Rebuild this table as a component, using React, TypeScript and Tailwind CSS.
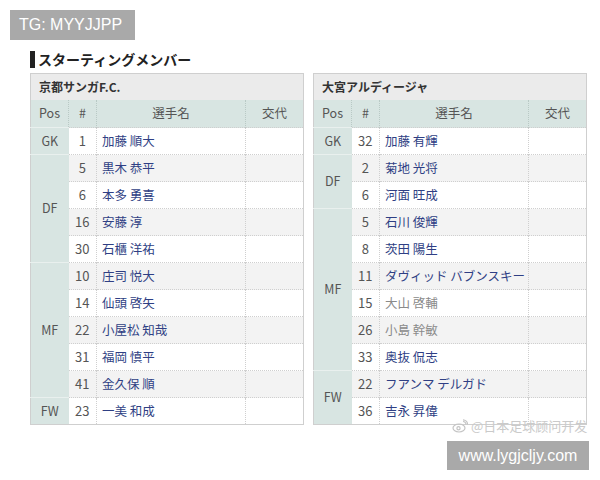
import React from 'react';

type Player = { no: number; name: string; muted?: boolean };
type Group = { pos: string; players: Player[] };
type Team = { name: string; groups: Group[] };

const kyoto: Team = {
  name: '京都サンガF.C.',
  groups: [
    { pos: 'GK', players: [{ no: 1, name: '加藤 順大' }] },
    {
      pos: 'DF',
      players: [
        { no: 5, name: '黒木 恭平' },
        { no: 6, name: '本多 勇喜' },
        { no: 16, name: '安藤 淳' },
        { no: 30, name: '石櫃 洋祐' },
      ],
    },
    {
      pos: 'MF',
      players: [
        { no: 10, name: '庄司 悦大' },
        { no: 14, name: '仙頭 啓矢' },
        { no: 22, name: '小屋松 知哉' },
        { no: 31, name: '福岡 慎平' },
        { no: 41, name: '金久保 順' },
      ],
    },
    { pos: 'FW', players: [{ no: 23, name: '一美 和成' }] },
  ],
};

const omiya: Team = {
  name: '大宮アルディージャ',
  groups: [
    { pos: 'GK', players: [{ no: 32, name: '加藤 有輝' }] },
    {
      pos: 'DF',
      players: [
        { no: 2, name: '菊地 光将' },
        { no: 6, name: '河面 旺成' },
      ],
    },
    {
      pos: 'MF',
      players: [
        { no: 5, name: '石川 俊輝' },
        { no: 8, name: '茨田 陽生' },
        { no: 11, name: 'ダヴィッド バブンスキー' },
        { no: 15, name: '大山 啓輔', muted: true },
        { no: 26, name: '小島 幹敏', muted: true },
        { no: 33, name: '奥抜 侃志' },
      ],
    },
    {
      pos: 'FW',
      players: [
        { no: 22, name: 'フアンマ デルガド' },
        { no: 36, name: '吉永 昇偉' },
      ],
    },
  ],
};

function LineupTable({ team }: { team: Team }) {
  let idx = 0;
  return (
    <table className="w-[273px] table-fixed border-collapse border border-[#cfcfcf] text-[12.5px] text-[#555]">
      <colgroup>
        <col className="w-[38px]" />
        <col className="w-[28px]" />
        <col className="w-[149px]" />
        <col className="w-[58px]" />
      </colgroup>
      <thead>
        <tr className="h-[26px] bg-[#ebebeb]">
          <th colSpan={4} className="pl-[8px] text-left text-[12px] font-bold text-[#333]">
            {team.name}
          </th>
        </tr>
        <tr className="h-[28px] bg-[#d8e5e2] font-normal">
          <th className="font-normal">Pos</th>
          <th className="border-l border-dotted border-[#b9c9c5] font-normal">#</th>
          <th className="border-l border-dotted border-[#b9c9c5] font-normal">選手名</th>
          <th className="border-l border-dotted border-[#b9c9c5] font-normal">交代</th>
        </tr>
      </thead>
      <tbody>
        {team.groups.map((g) =>
          g.players.map((p, i) => {
            const shade = idx++ % 2 === 1 ? 'bg-[#f3f3f3]' : 'bg-white';
            return (
              <tr key={`${g.pos}-${p.no}`} className="h-[27px]">
                {i === 0 && (
                  <td
                    rowSpan={g.players.length}
                    className="border-t border-[#e9f0ee] bg-[#d8e5e2] text-center"
                  >
                    {g.pos}
                  </td>
                )}
                <td className={`${shade} border-t border-dotted border-[#cfcfcf] text-center text-[13px]`}>{p.no}</td>
                <td
                  className={`${shade} border-t border-l border-dotted border-[#cfcfcf] pl-[5px] whitespace-nowrap ${
                    p.muted ? 'text-[#8a8a8a]' : 'text-[#2f3f84]'
                  }`}
                >
                  {p.name}
                </td>
                <td className={`${shade} border-t border-l border-dotted border-[#cfcfcf]`} />
              </tr>
            );
          })
        )}
      </tbody>
    </table>
  );
}

export default function App() {
  return (
    <div
      className="relative h-[480px] w-[600px] overflow-hidden bg-white"
      style={{ fontFamily: '"Noto Sans CJK JP", "Liberation Sans", sans-serif' }}
    >
      <div className="pl-[10px] pt-[10px]">
        <div className="inline-flex h-[30px] w-[125px] items-center bg-[#a9a9a9] pl-[9px] font-['Liberation_Sans',sans-serif] text-[16px] text-white">
          TG: MYYJJPP
        </div>
      </div>
      <div className="ml-[30px] mt-[10px] flex items-center gap-[3px]">
        <span className="h-[17px] w-[5px] bg-[#222]" />
        <h2 className="text-[14px] font-bold leading-[18px] text-[#222]">スターティングメンバー</h2>
      </div>
      <div className="ml-[30px] mt-[5px] flex items-start gap-[9px]">
        <LineupTable team={kyoto} />
        <LineupTable team={omiya} />
      </div>
      <div className="absolute left-[452px] top-[416px] flex items-center gap-[3px] text-[13px] text-[#cacaca]">
        <svg width="16" height="14" viewBox="0 0 16 14" fill="none" stroke="#c4c4c4" strokeWidth="1.2">
          <ellipse cx="7" cy="9" rx="6" ry="4" />
          <circle cx="6.5" cy="9.3" r="1.6" />
          <path d="M11 2.5a3 3 0 0 1 3 3M11 0.8a4.8 4.8 0 0 1 4.6 4.6" />
        </svg>
        <span>@日本足球顾问开发</span>
      </div>
      <div className="absolute left-[447px] top-[441px] flex h-[29px] w-[142px] items-center justify-center bg-[#a9a9a9] font-['Liberation_Sans',sans-serif] text-[16px] text-white">
        www.lygjcljy.com
      </div>
    </div>
  );
}
